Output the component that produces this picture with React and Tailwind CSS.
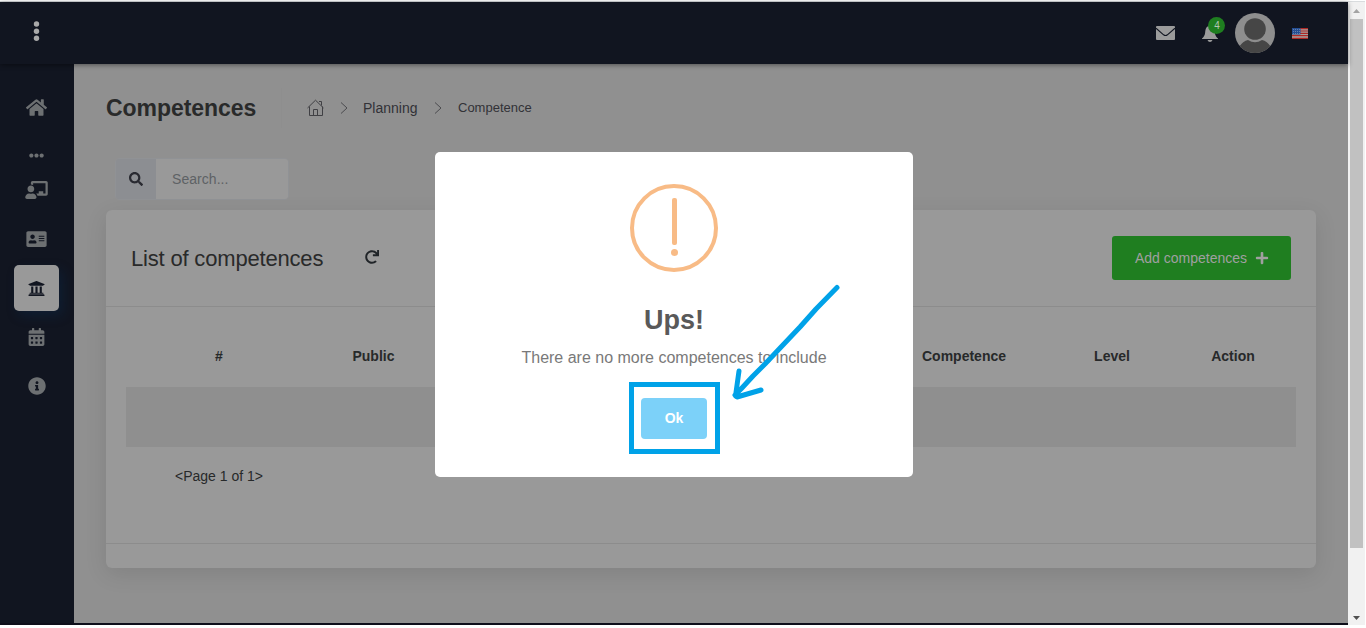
import {
  FaHome, FaEllipsisH, FaChalkboardTeacher, FaAddressCard, FaUniversity,
  FaCalendarAlt, FaInfoCircle, FaSearch, FaRedo, FaPlus,
} from "react-icons/fa";

function Chevron() {
  return (
    <svg className="h-3 w-[9px]" viewBox="0 0 9 12" fill="none" stroke="#4b4b4f" strokeWidth="1">
      <path d="M1 0.5 7 6 1 11.5" />
    </svg>
  );
}

function Header() {
  return (
    <header className="relative z-10 flex h-[62px] shrink-0 items-center bg-[#111520] shadow-[0_1px_5px_rgba(0,0,0,0.45)]">
      <svg className="mb-1 ml-[33px] h-5 w-2" viewBox="0 0 8 20" fill="#a9a9a9">
        <circle cx="3.5" cy="3" r="2.7" />
        <circle cx="3.5" cy="10.2" r="2.7" />
        <circle cx="3.5" cy="17.3" r="2.7" />
      </svg>
      <div className="mr-10 ml-auto flex items-center">
        <svg className="mr-[27px] h-3.5 w-[19px]" viewBox="0 0 19 14">
          <rect width="19" height="14" rx="1" fill="#9b9b9b" />
          <path d="M0 2.200 7.600 8.800Q9.500 10.300 11.400 8.800L19 2.200" fill="none" stroke="#111520" strokeWidth="1.1" />
        </svg>
        <div className="relative mr-[17px] h-[17px] w-4">
          <svg className="h-[17px] w-4" viewBox="0 0 16 17" fill="#9b9b9b">
            <path d="M8 0.5C5 1 3.6 3 3.3 6 3 10 2.5 11 0 13.6V14H16V13.6C13.5 11 13 10 12.7 6 12.4 3 11 1 8 0.5Z" />
            <path d="M5.5 15H10.5Q9.8 17 8 17T5.5 15Z" />
          </svg>
          <span className="absolute -top-2 left-[6px] flex h-[17px] w-[17px] items-center justify-center rounded-full bg-[#1f7e20] pl-px text-[10px] text-[#b4c4b4]">4</span>
        </div>
        <svg className="mr-[17px] h-10 w-10" viewBox="0 0 40 40">
          <defs><clipPath id="avatar"><circle cx="20" cy="20" r="20" /></clipPath></defs>
          <g clipPath="url(#avatar)">
            <rect width="40" height="40" fill="#8e8e8e" />
            <circle cx="20" cy="16" r="10.8" fill="#464646" />
            <path d="M4 34Q8 28 13 27Q20 31.500 27 27Q32 28 36 34V41H4Z" fill="#464646" />
          </g>
        </svg>
        <svg className="h-[11px] w-4" viewBox="0 0 16 11">
          <rect width="16" height="11" fill="#a4a0a0" />
          <path d="M0 .7H16M0 3H16M0 5.300H16M0 7.700H16M0 10.300H16" stroke="#b02824" strokeWidth="1.2" />
          <rect width="8.500" height="6.500" fill="#244e94" />
          <path d="M1 1.500H8M1 3.500H8M1 5.500H8" stroke="#8497b4" strokeWidth=".7" strokeDasharray="1 1" />
        </svg>
      </div>
    </header>
  );
}

function Sidebar() {
  return (
    <nav className="flex w-[74px] shrink-0 flex-col items-center bg-[#111520] pt-8 pr-px text-[#6d7072]">
      <div className="flex h-[22px] items-center"><FaHome className="h-[19px] w-[21px]" /></div>
      <div className="mt-[29px] flex h-4 items-center"><FaEllipsisH className="size-[15px]" /></div>
      <div className="mt-4 flex h-[22px] items-center"><FaChalkboardTeacher className="h-[18px] w-[23px]" /></div>
      <div className="mt-[27px] flex h-[22px] items-center"><FaAddressCard className="h-[18px] w-[21px]" /></div>
      <div className="mt-[15px] flex h-[46px] w-[45px] items-center justify-center rounded-[5px] bg-[#999] text-[#111520] shadow-[4px_5px_12px_rgba(10,50,90,0.3)]">
        <FaUniversity className="size-[17px]" />
      </div>
      <div className="mt-[15px] flex h-[22px] items-center"><FaCalendarAlt className="h-[18px] w-[17px]" /></div>
      <div className="mt-[27px] flex h-[22px] items-center"><FaInfoCircle className="size-[18px]" /></div>
    </nav>
  );
}

function PageHeading() {
  return (
    <div className="flex h-10 items-center">
      <h1 className="w-[176px] border-r border-[#8e8e8e] text-[23px] leading-10 font-bold tracking-[-0.05px] text-[#292a2a]">Competences</h1>
      <div className="flex items-center pl-[25px] text-sm text-[#323237]">
        <svg className="mr-4 h-[18px] w-[17px]" viewBox="0 0 17 18" fill="none" stroke="#404044" strokeWidth="1">
          <path d="M.5 9 8.500 1.200 16.500 9M2.500 7.500V16.500H15.500V7.500M6.500 16.500V10.500H10.500V16.500M12 2.500H14.500V6.500" />
        </svg>
        <Chevron />
        <span className="ml-[14px] w-[55px] text-[14px]">Planning</span>
        <span className="ml-4 flex"><Chevron /></span>
        <span className="ml-[15px] pt-px text-[13px]">Competence</span>
      </div>
    </div>
  );
}

function SearchBox() {
  return (
    <div className="mt-[30px] ml-[9px] flex h-[42px] w-[174px] overflow-hidden rounded-[4px] border border-[#909295]">
      <div className="flex w-10 items-center justify-center bg-[#8c8e92] pr-px text-[#292a31]"><FaSearch className="size-3.5" /></div>
      <div className="flex flex-1 items-center bg-[#999] pl-4 text-[14px] tracking-[0.05px] text-[#5e6265]">Search...</div>
    </div>
  );
}

const columns = [
  ["#", "w-[186px]"],
  ["Public", "w-[123px]"],
  ["", "w-[447px]"],
  ["Competence", "w-[164px]"],
  ["Level", "w-[132px]"],
  ["Action", "w-[110px]"],
];

function CompetenceCard() {
  return (
    <section className="mt-[10px] flex h-[358px] w-[1210px] flex-col rounded-[6px] bg-[#999] text-[#27292a] shadow-[0_6px_22px_rgba(0,0,0,0.1)]">
      <div className="flex h-[97px] shrink-0 items-center border-b border-[#8c8c8c] px-[25px]">
        <h2 className="w-[234px] text-[22px] tracking-[-0.18px] text-[#292a2a]">List of competences</h2>
        <FaRedo className="mb-[3px] size-3.5 text-[#202428]" />
        <button className="ml-auto flex h-11 w-[179px] items-center justify-center gap-2 rounded-[3px] bg-[#1f7e20] pl-px text-[14px] text-[#a0a0a0]">
          Add competences <FaPlus className="size-3.5" />
        </button>
      </div>
      <div className="px-5">
        <div className="flex h-20 items-center pt-[19px] text-center text-[14px] font-bold">
          {columns.map(([name, width], i) => <div key={i} className={width}>{name}</div>)}
        </div>
        <div className="h-[60px] bg-[#8f8f8f]" />
        <p className="mt-[19px] ml-[49px] text-[14px] leading-5">{"<Page 1 of 1>"}</p>
      </div>
      <div className="mt-auto h-[25px] border-t border-[#8c8c8c]" />
    </section>
  );
}

function Dialog() {
  return (
    <div className="absolute top-[152px] left-[435px] z-20 flex h-[325px] w-[478px] flex-col items-center rounded-[5px] bg-white pt-8">
      <div className="flex h-[88px] w-[88px] flex-col items-center rounded-full border-4 border-[#f8bb86] pt-2.5">
        <div className="ml-px h-[47px] w-[5px] rounded-[2px] bg-[#f8bb86]" />
        <div className="mt-[4px] ml-px h-[7px] w-[7px] rounded-full bg-[#f8bb86]" />
      </div>
      <h3 className="mt-7 text-[27px] leading-10 font-bold text-[#595959]">Ups!</h3>
      <p className="mt-[5px] text-[16px] leading-[26px] text-[#797979]">There are no more competences to include</p>
      <div className="mt-[11px] flex h-[72px] w-[91px] items-center justify-center border-[5px] border-[#00a2e8]">
        <button className="h-[41px] w-[66px] rounded-[4px] bg-[#7cd1f9] pt-px text-[14px] font-bold text-white">Ok</button>
      </div>
      <svg className="absolute top-[130px] left-[295px] h-[120px] w-[112px]" viewBox="0 0 112 120" fill="none" stroke="#00a2e8" strokeWidth="5" strokeLinecap="round" strokeLinejoin="round">
        <path d="M107 5.500 86 27 70 45 52 64 35 82 23 94 11 107 5 113M9 89 5.500 114 7 115 31 108" />
      </svg>
    </div>
  );
}

function Scrollbar() {
  return (
    <div className="flex w-[17px] shrink-0 flex-col items-center bg-[#f1f1f1]">
      <div className="flex h-[17px] items-center"><svg className="h-1 w-[7px]" viewBox="0 0 7 4" fill="#a3a3a3"><path d="M0 4 3.500 0 7 4Z" /></svg></div>
      <div className="h-[529px] w-[13px] bg-[#c1c1c1]" />
      <div className="mt-auto flex h-[15px] items-center"><svg className="h-1 w-[7px]" viewBox="0 0 7 4" fill="#505050"><path d="M0 0H7L3.500 4Z" /></svg></div>
    </div>
  );
}

export default function App() {
  return (
    <div className="h-[628px] overflow-hidden bg-white font-['Liberation_Sans',Arial,sans-serif]">
      <div className="relative flex h-[625px] w-[1365px] flex-col">
        <div className="h-0.5 shrink-0 border-b border-[#d9dcde] bg-white" />
        <div className="flex min-h-0 flex-1">
          <div className="flex w-[1348px] flex-col border-b-2 border-[#0e0e1a]">
            <Header />
            <div className="flex min-h-0 flex-1">
              <Sidebar />
              <main className="flex-1 bg-[#909090] pt-6 pl-8">
                <PageHeading />
                <SearchBox />
                <CompetenceCard />
              </main>
            </div>
          </div>
          <Scrollbar />
        </div>
        <Dialog />
      </div>
    </div>
  );
}
